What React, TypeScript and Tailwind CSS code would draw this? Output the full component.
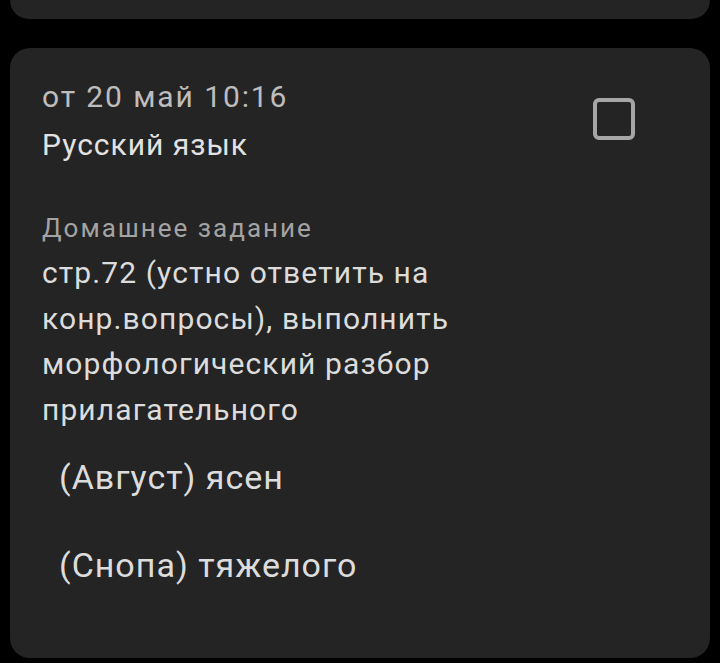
import { useState } from 'react';

type Homework = {
  id: number;
  issued: string;
  subject: string;
  text: string;
  items: string[];
};

const homework: Homework[] = [
  {
    id: 2,
    issued: 'от 20 май 10:16',
    subject: 'Русский язык',
    text: 'стр.72 (устно ответить на конр.вопросы), выполнить морфологический разбор прилагательного',
    items: ['(Август) ясен', '(Снопа) тяжелого'],
  },
];

function CheckBox({ checked, onToggle }: { checked: boolean; onToggle: () => void }) {
  return (
    <button
      onClick={onToggle}
      className="w-[42px] h-[42px] rounded-[6px] border-[4.5px] border-[#a6a6a6] flex items-center justify-center"
    >
      {checked && (
        <svg viewBox="0 0 24 24" className="w-8 h-8" fill="none" stroke="#a6a6a6" strokeWidth={3}>
          <path d="M5 12l5 5 9-10" />
        </svg>
      )}
    </button>
  );
}

function HomeworkCard({ hw }: { hw: Homework }) {
  const [done, setDone] = useState(false);

  return (
    <div className="mx-[10px] rounded-[20px] bg-[#242424] flex pl-8 pt-[25px] pb-[69px]">
      <div className="w-[530px]">
        <p className="text-[30px] leading-[48px] tracking-[1.9px] text-[#bdbdbd]">{hw.issued}</p>
        <p className="text-[30px] leading-[48px] tracking-[1px] text-[#e2e2e2]">{hw.subject}</p>

        <p className="mt-[43px] text-[26px] leading-[32px] tracking-[2px] text-[#a3a3a3]">
          Домашнее задание
        </p>
        <p className="mt-[6px] text-[30px] leading-[45.5px] tracking-[1.1px] text-[#dcdcdc]">{hw.text}</p>

        <p className="mt-[23px] pl-[17px] text-[34px] leading-[45.5px] tracking-[1px] text-[#dcdcdc]">
          {hw.items[0]}
        </p>
        <p className="mt-[42.5px] pl-[17px] text-[34px] leading-[45.5px] tracking-[1px] text-[#dcdcdc]">
          {hw.items[1]}
        </p>
      </div>
      <div className="ml-auto mr-[75px] mt-[25px]">
        <CheckBox checked={done} onToggle={() => setDone(!done)} />
      </div>
    </div>
  );
}

export default function App() {
  return (
    <div className="min-h-screen bg-black font-['Roboto',sans-serif] overflow-hidden">
      {/* tail of the previous card, scrolled mostly out of view */}
      <div className="mx-[10px] h-[19px] rounded-b-[20px] bg-[#242424]" />
      <div className="mt-[29px]">
        {homework.map((hw) => (
          <HomeworkCard key={hw.id} hw={hw} />
        ))}
      </div>
    </div>
  );
}
